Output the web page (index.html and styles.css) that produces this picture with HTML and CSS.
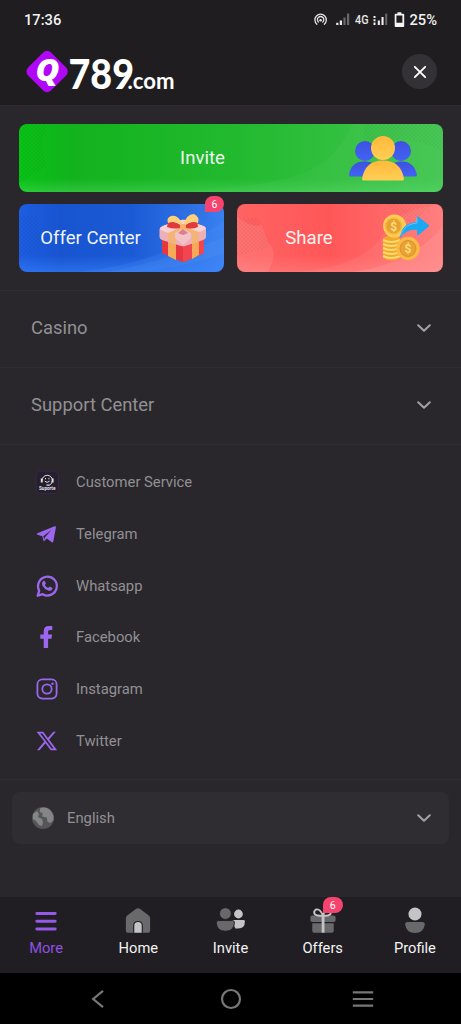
FILE: index.html
```html
<!DOCTYPE html>
<html lang="en">
<head>
<meta charset="utf-8">
<meta name="viewport" content="width=device-width, initial-scale=1">
<title>Q789.com</title>
<link rel="stylesheet" href="styles.css">
</head>
<body>
<div class="screen">
  <div class="status">
    <span class="time">17:36</span>
    <svg class="status-icons" width="92" height="20" viewBox="0 0 92 20">
      <g fill="none" stroke="#e4e3e5" stroke-width="1.3" stroke-linecap="round">
        <path d="M2.900 14.200a5.700 5.700 0 1 1 7.400 0"/>
        <path d="M4.400 12a3.200 3.200 0 1 1 4.400 0"/>
      </g>
      <path d="M5.300 10.200a1.300 1.300 0 1 1 2.600 0 1.300 1.300 0 0 1-2.600 0" fill="#e4e3e5"/>
      <path d="M22.200 12.800h2.200v2.200h-2.200zM25.800 10.600h2.200V15h-2.200z" fill="#eee"/>
      <path d="M29.400 7.400h2.200V15h-2.200zM33 3.600h2.200V15H33z" fill="#69676a"/>
      <text x="41" y="14.200" class="net" textLength="13.500" lengthAdjust="spacingAndGlyphs">4G</text>
      <path d="M59.500 6h2v2h-2zM59.500 9.300h2v2h-2zM59.500 12.600h2V15h-2zM63.800 10.500h2.100V15h-2.100zM67.500 7h2.100v8h-2.100z" fill="#eee"/>
      <path d="M71.200 3.600h2V15h-2z" fill="#69676a"/>
      <path fill-rule="evenodd" fill="#f5f5f5" d="M83.500 2.200h3.800v1.600h1.900q1 0 1 1v11.200q0 1-1 1h-7.500q-1 0-1-1V4.800q0-1 1-1h1.800zM82.400 5.500v7.300h6V5.500z"/>
    </svg>
    <span class="battery">25%</span>
  </div>

  <header class="header">
    <svg class="logo" width="152" height="62" viewBox="0 -8 152 62">
      <rect x="5.900" y="6.300" width="32.400" height="32.400" rx="5.500" fill="#b107f7" transform="rotate(45 22.100 22.500)"/>
      <text class="logo-q" x="10.500" y="32" textLength="24" lengthAdjust="spacingAndGlyphs">Q</text>
      <text class="logo-num" x="43.500" y="39.500" textLength="65.500" lengthAdjust="spacingAndGlyphs">789</text>
      <text class="logo-com" x="102.500" y="39.500" textLength="47" lengthAdjust="spacingAndGlyphs">.com</text>
    </svg>
    <button class="close" aria-label="Close">
      <svg width="14" height="14" viewBox="0 0 14 14"><path d="M1.800 1.800l10.400 10.400M12.200 1.800L1.800 12.200" stroke="#fff" stroke-width="1.900" stroke-linecap="round"/></svg>
    </button>
  </header>

  <main class="main">
    <section class="promos">
      <a class="promo invite">
        <svg class="texture" viewBox="0 0 424 68" preserveAspectRatio="none">
          <defs><pattern id="dots" width="4" height="4" patternUnits="userSpaceOnUse"><path d="M0 0h2v2H0zM2 2h2v2H2z" fill="#000" opacity=".04"/></pattern></defs>
          <path d="M0 0h28q-8 20 0 42L0 60z" fill="url(#dots)"/>
          <path d="M345 0h79v28q-35-20-79-8z" fill="url(#dots)"/>
          <path d="M150 68C290 61 310 45 334 0h90v68z" fill="#fff" opacity=".03"/>
        </svg>
        <span>Invite</span>
        <svg class="art people" width="70" height="46" viewBox="0 0 70 46">
          <defs>
            <linearGradient id="blue" x2="0" y2="1"><stop stop-color="#3e51df"/><stop offset="1" stop-color="#4263f4"/></linearGradient>
            <linearGradient id="gold" x2="0" y2="1"><stop stop-color="#ffb93b"/><stop offset="1" stop-color="#ffce55"/></linearGradient>
          </defs>
          <g fill="url(#blue)"><circle cx="17" cy="16" r="10"/><circle cx="53" cy="16" r="10"/>
          <path d="M1 40Q3 26 17 26.500q13 0 16 13.500v1.500H3q-2 0-2-1.500zM37 40q3-13 16-13.500Q66 26 69 40q0 1.500-2 1.500H38z"/></g>
          <circle cx="35" cy="13" r="12" fill="url(#gold)"/>
          <path d="M14 44Q17 25.500 35 25.500T56 44q0 1.500-2 1.500H16q-2 0-2-1.500z" fill="url(#gold)"/>
        </svg>
      </a>
      <div class="promo-row">
        <a class="promo offer">
          <svg class="texture" viewBox="0 0 206 68" preserveAspectRatio="none">
            <path d="M0 12h18l4 34-22 8zM145 0h50l-8 17z" fill="url(#dots)"/>
            <path d="M60 68q80-8 146-51v51z" fill="#5599ff" opacity=".16"/>
            <path d="M90 68q60-12 116-35v16Q160 65 118 68z" fill="#77b0ff" opacity=".1"/>
          </svg>
          <span>Offer Center</span>
          <svg class="art gift" width="50" height="50" viewBox="0 0 50 50">
            <path d="M4 22l21 8 21-8v18L27 48.500q-2 .8-4 0L4 40z" fill="#e63640"/>
            <path d="M25 29l21-8v19l-19 8.500-2 .5z" fill="#f14650"/>
            <path d="M10 24l8 4v19l-8-4zM34 27l7-4v19l-7 4z" fill="#f8a957"/>
            <path d="M1.500 16Q2 14 5 13l18-6q2-.6 4 0l18 6q3 1 3 3v8q0 2-3 3l-18 6q-2 .6-4 0L4 27q-2.500-1-2.500-3z" fill="#eeb0b8"/>
            <path d="M2 15Q4 13 7 12l16-5q2-.6 4 0l16 5q4 1 5 3-1 2-4 3l-17 6q-2 .6-4 0L5 18q-3-1-3-3z" fill="#f8d2d3"/>
            <path d="M10 12l7-2 24 9v9l-7 3v-9zM35 9l7 3-24 10v9l-8-3v-8z" fill="#f5b477"/>
            <path d="M17 20l8-4.500 8 4.500v5l-8 7-8-7z" fill="#f2c2c6"/>
            <path d="M20 20l5-4 5 4-5 2z" fill="#dc7e8f"/>
            <path d="M25 14Q18 8 10 9l-1 5q8 3 16 0M25 14q7-6 14-5l1 5q-7 3-15 0" fill="#e03a3d"/>
            <path d="M25 13Q18 7 10 10q-2-5 3-7 7-2 12 9M25 13Q28 1 36 1q6 3 4 9-7-3-15 3" fill="#ffcf7b"/>
            <rect x="22" y="11" width="6" height="5" rx="2" fill="#ffb262"/>
          </svg>
          <b class="badge badge-offer">6</b>
        </a>
        <a class="promo share">
          <svg class="texture" viewBox="0 0 206 68" preserveAspectRatio="none">
            <path d="M0 12q13 12 25 9l6 18q12 7 0 29H0z" fill="#fff" opacity=".09"/>
            <path d="M55 68q70-3 94-40Q160 5 206 0v68z" fill="#fff" opacity=".06"/>
            <path d="M115 68q58-7 91-45v45z" fill="#fff" opacity=".09"/>
            <path d="M0 14h22l10 30-32 8zM148 0h50l-24 20z" fill="url(#dots)"/>
          </svg>
          <span>Share</span>
          <svg class="art coins" width="50" height="50" viewBox="0 0 50 50">
            <path d="M4 25q8-5 17 0v20q-8 5-17 0z" fill="#f1a92d"/>
            <path d="M4 27q8 4 17 0M4 31q8 4 17 0M4 35q8 4 17 0M4 39q8 4 17 0M4 43q8 4 17 0" fill="none" stroke="#ffda70" stroke-width="2.200"/>
            <circle cx="15.500" cy="13" r="11.500" fill="#ffcd55"/>
            <circle cx="14.500" cy="13" r="8" fill="#e5a133" stroke="#f6b93f" stroke-width="1.500"/>
            <circle cx="29" cy="35.500" r="11.700" fill="#fbbb43"/>
            <circle cx="29" cy="35.500" r="8" fill="#e9a238" stroke="#d9912f" stroke-width="1"/>
            <text class="coin" x="14.700" y="17.600">$</text><text class="coin" x="29" y="40">$</text>
            <path d="M21 25q1-15 17-16V4.500q0-2 1.500-.8l10 8q1 1 0 2l-10 8.200q-1.500 1-1.500-1v-4Q27 16 21 25z" fill="#1ca8f2"/>
            <path d="M22 22q3-11 16-12V4.500" fill="none" stroke="#55cafa" stroke-width="1"/>
          </svg>
        </a>
      </div>
    </section>

    <nav class="sections">
      <a class="section"><span>Casino</span><svg class="chev" viewBox="0 0 14 8"><path d="M1.200 1.200L7 6.800l5.800-5.600"/></svg></a>
      <a class="section"><span>Support Center</span><svg class="chev" viewBox="0 0 14 8"><path d="M1.200 1.200L7 6.800l5.800-5.600"/></svg></a>
    </nav>

    <ul class="links">
      <li>
        <svg viewBox="0 0 24 24"><rect x="1" y="1" width="22.500" height="22.500" rx="5" fill="#251f2e" stroke="#38264a"/>
          <g fill="none" stroke="#e1dfe5" stroke-width="1"><path d="M7 10.500a5.200 5.200 0 0 1 10.400 0q0 3.500-3 4.500"/><path d="M9.800 11.200q2.300 2.300 4.800 0"/></g>
          <path d="M5.800 8.500h1.900v4H5.800zM16.700 8.500h1.900v4h-1.900zM10 8h1v1.300h-1zM13.400 8h1v1.300h-1zM11.500 14.500h3v1.300h-3z" fill="#e1dfe5"/>
          <text class="suporte" x="12.200" y="20.300">Suporte</text></svg>
        <span>Customer Service</span></li>
      <li>
        <svg viewBox="0 0 24 24" fill="#9c67ee"><path d="M2.400 11.300L19.600 4.300q1.600-.5 1.300 1.300l-2.600 13.800q-.4 1.600-1.800.6l-4.700-3.500-2.200 2.300q-.9.900-1.200-.4l-1.100-4.200-4.800-1.500q-1.700-.6-.1-1.400z"/><path d="M8.300 14.300l8-6.200-6.300 7.100-.9 2.400z" fill="#29272b"/></svg>
        <span>Telegram</span></li>
      <li>
        <svg viewBox="0 0 24 24"><path d="M2.700 21.700l1.500-5.100a9.400 9.400 0 1 1 3.500 3.600z" fill="none" stroke="#9c67ee" stroke-width="2.300" stroke-linejoin="round"/>
          <path d="M8.200 7.100q.8-.8 1.500-.1l1 2q.3.700-.2 1.200l-.7.900q1.100 2.100 3.300 3l1-1.100q.5-.5 1.100-.2l1.900 1q.8.500.2 1.500-1.200 2.200-4.100 1.300-4-1.400-6-5.300-.9-2.500 1-4.200z" fill="#9c67ee"/></svg>
        <span>Whatsapp</span></li>
      <li>
        <svg viewBox="0 0 24 24" fill="#9c67ee"><path d="M8.700 23v-9.300H5.300V9.500h3.400V6.300q0-5.200 5.300-5.300h3.300v4h-2.500q-1.700 0-1.700 1.800v2.700h4l-.6 4.200h-3.400V23z"/></svg>
        <span>Facebook</span></li>
      <li>
        <svg viewBox="0 0 24 24" fill="none" stroke="#9c67ee" stroke-width="1.800"><rect x="2.400" y="2.400" width="19.200" height="19.200" rx="5"/><circle cx="12" cy="12" r="4.700"/><circle cx="17.500" cy="6.700" r="1.200" fill="#9c67ee" stroke="none"/></svg>
        <span>Instagram</span></li>
      <li>
        <svg viewBox="0 0 24 24"><path fill="#9c67ee" fill-rule="evenodd" d="M1.600 2.700h6.600l4.700 6.200 5.400-6.200h2.500l-6.700 7.800 8 10.700h-6.400l-5.200-7-6 7H2l7.300-8.600zm3.500 1.700l11.500 15.100h2L7.400 4.400z"/></svg>
        <span>Twitter</span></li>
    </ul>

    <div class="language">
      <svg class="globe" viewBox="0 0 24 24"><circle cx="12" cy="12" r="11" fill="#565558"/>
        <path d="M9 2.500q5-2.500 10 1.500 4 4 3.500 10l-3 3-2.800-1-1-4.500-4.500-1 .5-3.500-3-1zM2 8l4-3 2 3-1 3 4 2 1 3-1 4-3-1-3-4-3-2z" fill="#858487"/></svg>
      <span>English</span>
      <svg class="chev" viewBox="0 0 14 8"><path d="M1.200 1.200L7 6.800l5.800-5.600"/></svg>
    </div>
  </main>

  <nav class="tabs">
    <a class="tab active"><svg viewBox="0 0 30 30"><path d="M5.200 7h19.600M5.200 15.200h19.600M5.200 23.500h19.600" stroke="#9559e8" stroke-width="3.200" stroke-linecap="round"/></svg><span>More</span></a>
    <a class="tab"><svg viewBox="0 0 30 30"><path d="M2 12q0-2 1.500-3L13 2q2-1.300 4 0l9.500 7q1.500 1 1.500 3v13.500q0 2-2 2H4q-2 0-2-2z" fill="#69686b"/><path d="M9.800 27.500v-7.300q0-5.200 5.200-5.200t5.200 5.200v7.300z" fill="#201e22"/><path d="M11 27.500v-7.500q0-4 4-4t4 4v7.500z" fill="#c4c3c5"/></svg><span>Home</span></a>
    <a class="tab"><svg viewBox="0 0 30 30"><g fill="#c4c3c5"><circle cx="23" cy="7.500" r="4.700"/><path d="M16 15.500q0-1.500 1.500-1.500h10.700q1.700 0 1.700 1.500 0 7.500-7.200 7.500h-3z"/></g><g fill="#69686b" stroke="#201e22"><circle cx="9" cy="7" r="6.300"/><path d="M-.8 17Q-.6 14.500 1.500 14.500h15q2.200 0 2.200 2.500-.5 9-9.700 9T-.8 17z"/></g></svg><span>Invite</span></a>
    <a class="tab"><svg viewBox="0 0 30 30"><path d="M3.500 9h23q2 0 2 2v3.500q0 1.500-2 1.500h-23q-2 0-2-1.500V11q0-2 2-2zM3.500 17.500h23v8q0 2-2 2h-19q-2 0-2-2z" fill="#69686b"/><path d="M13.600 9.500h3v18h-3z" fill="#c4c3c5"/><path d="M15 9.500Q12 1.500 7.500 2.700 4.500 4.500 6 7.500q1 2 9 2 7 0 8-2 1.500-3-1.500-4.800Q17 1.500 15 9.500z" fill="none" stroke="#c4c3c5" stroke-width="2"/></svg><span>Offers</span><b class="badge badge-tab">6</b></a>
    <a class="tab"><svg viewBox="0 0 30 30"><circle cx="15" cy="7.500" r="7" fill="#c4c3c5"/><path d="M4.500 18.500q0-2.500 2.500-2.500h16q2.500 0 2.500 2.500-1 9.300-10.500 9.300T4.500 18.500z" fill="#69686b"/></svg><span>Profile</span></a>
  </nav>

  <div class="system">
    <svg width="14" height="20" viewBox="0 0 14 20"><path d="M12 1.800L2.200 10l9.800 8.200" fill="none" stroke="#777" stroke-width="2.200"/></svg>
    <svg width="22" height="22" viewBox="0 0 22 22"><circle cx="11" cy="11" r="9" fill="none" stroke="#777" stroke-width="2.200"/></svg>
    <svg width="22" height="18" viewBox="0 0 22 18"><path d="M.8 2.400h20.400M.8 9h20.400M.8 15.700h20.400" stroke="#777" stroke-width="2.200"/></svg>
  </div>
</div>
</body>
</html>
```

FILE: styles.css
```css
* { box-sizing: border-box; }
body { margin: 0; background: #29272b; font-family: Roboto, "Liberation Sans", sans-serif; }
svg { display: block; flex: none; }
.screen { width: 461px; height: 1024px; display: flex; flex-direction: column; overflow: hidden; }

.status { height: 40px; background: #1f1d20; display: flex; align-items: center; padding: 0 24px; font-size: 14.700px; font-weight: 500; color: #f1f1f2; }
.time { flex: 1; }
.status-icons { margin: 0 3px 0 0; }
.net { font: 500 12.500px Roboto, sans-serif; fill: #e8e8e8; }

.header { height: 65px; background: #1f1d20; display: flex; align-items: center; justify-content: space-between; padding: 0 24px 2px 25px; }
.logo { overflow: visible; }
.logo-q { font: italic 800 30px "Open Sans", sans-serif; fill: #fff; }
.logo-num { font: 900 41px Lato, sans-serif; fill: #fff; }
.logo-com { font: 700 23px Lato, sans-serif; fill: #fff; }
.close { width: 35px; height: 35px; padding: 0; border: 0; border-radius: 50%; background: #333135; display: grid; place-items: center; }

.main { height: 792px; border-top: 1px solid #2c2a2e; background: #29272b; }
.promos { height: 184px; padding: 18px 18.500px 0; display: flex; flex-direction: column; gap: 12px; }
.promo { position: relative; height: 68px; border-radius: 8px; display: flex; align-items: center; font-size: 18.600px; color: #fffffff0; }
.promo span { position: relative; text-align: center; }
.texture { position: absolute; inset: 0; width: 100%; height: 100%; border-radius: 8px; }
.art { position: relative; }
.invite { background: linear-gradient(0deg, #55dc6966, #55dc6900 20%), linear-gradient(90deg, #08c315, #12b21d 12%, #24ba31 55%, #43c651); }
.invite span { width: 368px; }
.people { margin-left: -39px; }
.promo-row { display: flex; gap: 13px; }
.promo-row .promo { flex: 1; }
.offer { background: linear-gradient(0deg, #3983ff88, #3983ff00 24%), linear-gradient(90deg, #1d5de1, #1854cf 20%, #1b5ad5 55%, #3980f0); }
.offer span { width: 144px; }
.gift { margin-left: -5px; }
.share { background: linear-gradient(0deg, #ff858577, #ff858500 24%), linear-gradient(90deg, #ff6363, #ff5758 45%, #ff7777); }
.share span { width: 144px; }
.coins { margin-left: -2px; }
.coin { font: 700 12px Roboto, sans-serif; fill: #ffdc72; text-anchor: middle; }
.badge { position: absolute; display: grid; place-items: center; font-size: 10.500px; font-weight: 400; color: #fff; background: #f7446f; border-radius: 9px 9px 9px 0; }
.badge-offer { width: 19px; height: 16px; top: -8px; right: 0; }
.badge-tab { width: 20px; height: 16px; top: 0; left: 46px; }

.section { height: 77px; border-top: 1px solid #302e32; padding: 0 30px 3px 31px; display: flex; align-items: center; justify-content: space-between; font-size: 18.400px; color: #929094; }
.chev { width: 14px; height: 8px; margin-right: .5px; fill: none; stroke: #a3a1a5; stroke-width: 2; stroke-linecap: round; stroke-linejoin: round; }

.links { list-style: none; height: 336px; margin: 0; padding: 11.300px 35px 0; border: solid #302e32; border-width: 1px 0; }
.links li { height: 51.700px; display: flex; align-items: center; gap: 17px; font-size: 14.800px; color: #929094; }
.links svg { width: 24px; height: 24px; }
.suporte { font: 700 4.600px Roboto, sans-serif; fill: #e7e5ea; text-anchor: middle; }

.language { height: 52px; margin: 12px 12px 0; padding: 0 18px 0 19px; border-radius: 8px; background: #2f2d31; display: flex; align-items: center; gap: 12px; font-size: 14.800px; color: #929094; }
.language span { flex: 1; }
.globe { width: 24px; height: 24px; }

.tabs { height: 76px; background: #201e22; display: flex; }
.tab { position: relative; flex: 1; display: flex; flex-direction: column; align-items: center; gap: 5px; padding-top: 10px; font-size: 14.700px; line-height: 17px; color: #f3f3f4; }
.tab svg { width: 28px; height: 28px; overflow: visible; }
.active { color: #9051e1; }

.system { flex: 1; background: #000; display: flex; gap: 114px; align-items: center; padding-left: 91px; }
.system svg:nth-child(2) { margin-left: 1px; }
.system svg:nth-child(3) { margin-left: -4px; }
```
